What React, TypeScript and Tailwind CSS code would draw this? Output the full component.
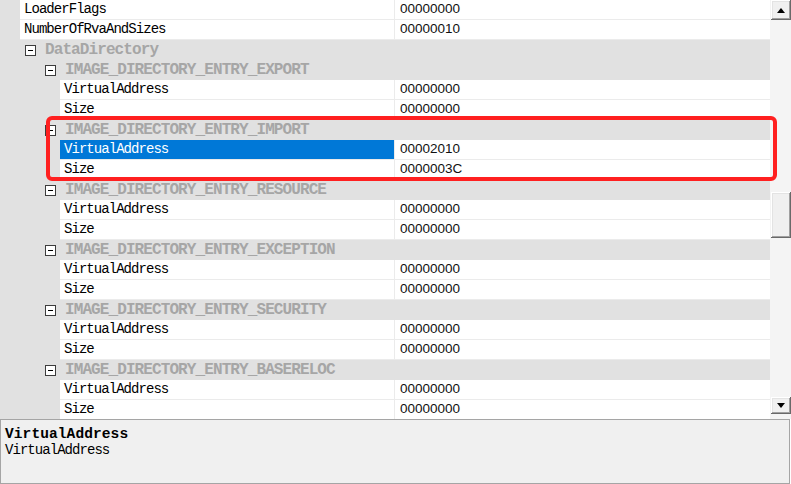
import React from "react";

type Row =
  | { kind: "prop"; depth: 1 | 2; name: string; value: string; selected?: boolean }
  | { kind: "cat"; depth: 1 | 2; name: string };

const rows: Row[] = [
  { kind: "prop", depth: 1, name: "LoaderFlags", value: "00000000" },
  { kind: "prop", depth: 1, name: "NumberOfRvaAndSizes", value: "00000010" },
  { kind: "cat", depth: 1, name: "DataDirectory" },
  { kind: "cat", depth: 2, name: "IMAGE_DIRECTORY_ENTRY_EXPORT" },
  { kind: "prop", depth: 2, name: "VirtualAddress", value: "00000000" },
  { kind: "prop", depth: 2, name: "Size", value: "00000000" },
  { kind: "cat", depth: 2, name: "IMAGE_DIRECTORY_ENTRY_IMPORT" },
  { kind: "prop", depth: 2, name: "VirtualAddress", value: "00002010", selected: true },
  { kind: "prop", depth: 2, name: "Size", value: "0000003C" },
  { kind: "cat", depth: 2, name: "IMAGE_DIRECTORY_ENTRY_RESOURCE" },
  { kind: "prop", depth: 2, name: "VirtualAddress", value: "00000000" },
  { kind: "prop", depth: 2, name: "Size", value: "00000000" },
  { kind: "cat", depth: 2, name: "IMAGE_DIRECTORY_ENTRY_EXCEPTION" },
  { kind: "prop", depth: 2, name: "VirtualAddress", value: "00000000" },
  { kind: "prop", depth: 2, name: "Size", value: "00000000" },
  { kind: "cat", depth: 2, name: "IMAGE_DIRECTORY_ENTRY_SECURITY" },
  { kind: "prop", depth: 2, name: "VirtualAddress", value: "00000000" },
  { kind: "prop", depth: 2, name: "Size", value: "00000000" },
  { kind: "cat", depth: 2, name: "IMAGE_DIRECTORY_ENTRY_BASERELOC" },
  { kind: "prop", depth: 2, name: "VirtualAddress", value: "00000000" },
  { kind: "prop", depth: 2, name: "Size", value: "00000000" },
];

function MinusBox() {
  return (
    <svg width="11" height="11" viewBox="0 0 11 11" className="shrink-0">
      <rect x="0.5" y="0.5" width="10" height="10" fill="#fff" stroke="#3c3c3c" />
      <line x1="3" y1="5.5" x2="8" y2="5.5" stroke="#000" />
    </svg>
  );
}

function PropRow({ row }: { row: Extract<Row, { kind: "prop" }> }) {
  const gutter = row.depth === 1 ? "w-[20px]" : "w-[60px]";
  const nameW = row.depth === 1 ? "w-[374px]" : "w-[334px]";
  return (
    <div className="flex h-[20px] shrink-0">
      <div className={`${gutter} shrink-0 bg-[#e1e1e1]`} />
      <div className="flex flex-1 border-b border-[#ebebeb] bg-white">
        <div
          className={`${nameW} shrink-0 flex items-center pl-[4px] font-mono text-[14px] tracking-[-0.95px] ${
            row.selected ? "bg-[#0078d7] text-white" : "text-black"
          }`}
        >
          {row.name}
        </div>
        <div className="w-px shrink-0 bg-[#ebebeb]" />
        <div className="flex-1 flex items-center pl-[5px] text-[13.5px] text-[#111] [font-family:Liberation_Sans,Arial,sans-serif]">
          {row.value}
        </div>
      </div>
    </div>
  );
}

function CatRow({ row }: { row: Extract<Row, { kind: "cat" }> }) {
  const pl = row.depth === 1 ? "pl-[25px]" : "pl-[45px]";
  return (
    <div className={`flex h-[20px] shrink-0 items-center gap-[9px] bg-[#e1e1e1] ${pl}`}>
      <MinusBox />
      <span className="font-mono font-bold text-[16px] tracking-[-0.9px] text-[#a6a6a6] leading-none">
        {row.name}
      </span>
    </div>
  );
}

function ScrollBtn({ up }: { up: boolean }) {
  return (
    <div className="flex h-full w-full items-center justify-center bg-[#f0f0f0] shadow-[inset_-1px_-1px_#696969,inset_1px_1px_#ffffff,inset_-2px_-2px_#a0a0a0,inset_2px_2px_#e3e3e3]">
      <svg width="8" height="5" viewBox="0 0 8 5">
        {up ? <polygon points="0,5 8,5 4,0" fill="#000" /> : <polygon points="0,0 8,0 4,5" fill="#000" />}
      </svg>
    </div>
  );
}

export default function App() {
  return (
    <div className="relative w-[791px] h-[484px] overflow-hidden bg-white">
      <div className="flex h-[419px]">
        <div className="flex w-[770px] flex-col overflow-hidden bg-[#e1e1e1]">
          {rows.map((r, i) =>
            r.kind === "prop" ? <PropRow key={i} row={r} /> : <CatRow key={i} row={r} />
          )}
        </div>
        <div className="flex w-[21px] flex-col bg-[#f4f4f4] pl-[1px]">
          <div className="h-[20px] w-[20px] shrink-0">
            <ScrollBtn up />
          </div>
          <div className="mt-[172px] h-[46px] w-[20px] shrink-0 bg-[#f0f0f0] shadow-[inset_-1px_-1px_#696969,inset_1px_1px_#ffffff,inset_-2px_-2px_#a0a0a0,inset_2px_2px_#e3e3e3]" />
          <div className="flex-1" />
          <div className="h-[17px] w-[20px] shrink-0">
            <ScrollBtn up={false} />
          </div>
          <div className="h-[5px] shrink-0" />
        </div>
      </div>
      <div className="h-[65px] w-[790px] border border-[#a5a5a5] bg-[#f0f0f0] px-[4px] pt-[6px]">
        <div className="font-mono font-bold text-[14.5px] tracking-[0.1px] leading-[16px] text-black">
          VirtualAddress
        </div>
        <div className="font-mono text-[14px] tracking-[-0.95px] leading-[17px] text-black">
          VirtualAddress
        </div>
      </div>
      <div className="absolute left-[46px] top-[116px] h-[65px] w-[731px] rounded-[6px] border-[4px] border-[#ff2020]" />
    </div>
  );
}
